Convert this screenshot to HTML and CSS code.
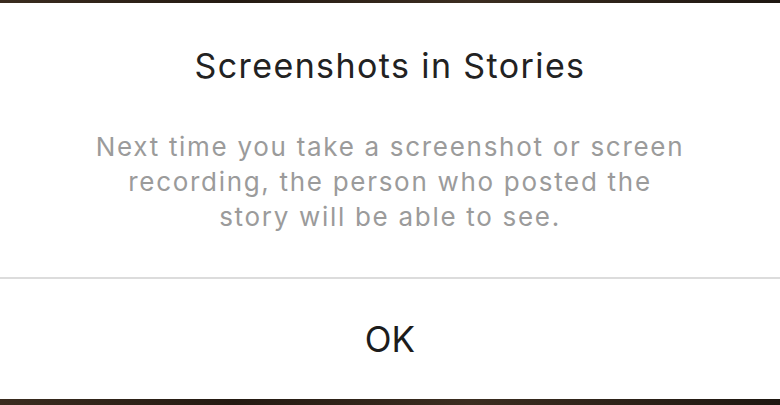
FILE: index.html
```html
<!DOCTYPE html>
<html>
<head>
    <title>Screenshots in Stories</title>
    <link rel="stylesheet" href="styles.css">
</head>
<body>
    <div class="alert">
        <div class="alert-body">
            <h1>Screenshots in Stories</h1>
            <p>Next time you take a screenshot or screen<br>recording, the person who posted the<br>story will be able to see.</p>
        </div>
        <button class="alert-button">OK</button>
    </div>
</body>
</html>
```

FILE: styles.css
```css
body {
    margin: 0;
    height: 405px;
    background: linear-gradient(90deg, #3a2c1f, #241a12 30%, #3b2d20 60%, #1e1711);
    font-family: Inter, "Noto Sans", sans-serif;
    overflow: hidden;
}
.alert {
    margin-top: 3px;
    height: 396px;
    background-color: #fff;
    display: flex;
    flex-direction: column;
}
.alert-body {
    height: 274px;
    border-bottom: 2px solid #dcdcdc;
    text-align: center;
    padding: 0 40px;
}
.alert-body h1 {
    margin: 43px 0 0;
    font-size: 34px;
    font-weight: 400;
    letter-spacing: 1.4px;
    color: #222;
    line-height: 40px;
}
.alert-body p {
    margin: 43px 0 0;
    font-size: 26px;
    letter-spacing: 1.7px;
    line-height: 35px;
    color: #9b9b9b;
}
.alert-button {
    flex: 1;
    border: none;
    background: none;
    font-family: inherit;
    font-size: 35px;
    color: #1c1c1c;
    padding: 0;
}
```
